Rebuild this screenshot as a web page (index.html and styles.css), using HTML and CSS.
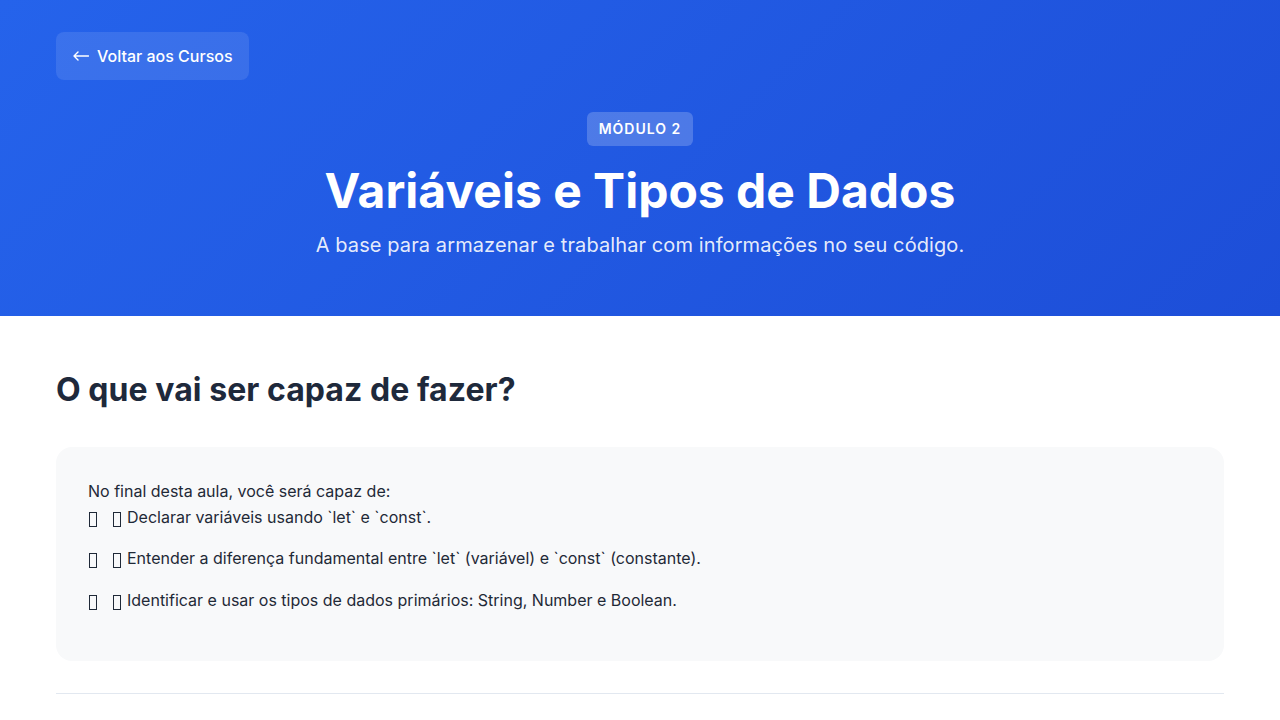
FILE: index.html
```html
<!DOCTYPE html>
<html lang="pt">
<head>
<meta charset="utf-8">
<title>Variáveis e Tipos de Dados</title>
<link rel="stylesheet" href="styles.css">
</head>
<body>
<header class="hero">
  <div class="hero-top">
    <a class="back-btn" href="#">
      <svg class="arrow" width="16" height="10" viewBox="0 0 16 10" aria-hidden="true"><path d="M15.5 5H1M5 1L1 5l4 4" fill="none" stroke="#fff" stroke-width="1.4" stroke-linecap="round" stroke-linejoin="round"/></svg>
      <span>Voltar aos Cursos</span>
    </a>
  </div>
  <div class="hero-center">
    <span class="badge">MÓDULO 2</span>
    <h1 class="title">Variáveis e Tipos de Dados</h1>
    <p class="subtitle">A base para armazenar e trabalhar com informações no seu código.</p>
  </div>
</header>
<main class="content">
  <h2 class="section-title">O que vai ser capaz de fazer?</h2>
  <div class="card">
    <p class="intro">No final desta aula, você será capaz de:</p>
    <ul class="goals">
      <li><span class="tofu first"></span><span class="tofu"></span>Declarar variáveis usando `let` e `const`.</li>
      <li><span class="tofu first"></span><span class="tofu"></span>Entender a diferença fundamental entre `let` (variável) e `const` (constante).</li>
      <li><span class="tofu first"></span><span class="tofu"></span>Identificar e usar os tipos de dados primários: String, Number e Boolean.</li>
    </ul>
  </div>
  <hr class="divider">
</main>
</body>
</html>
```

FILE: styles.css
```css
* { box-sizing: border-box; }
body {
  margin: 0;
  font-family: Inter, "Noto Sans", sans-serif;
  color: #1f2937;
  background: #ffffff;
}
.hero {
  height: 316px;
  background: linear-gradient(135deg, #2563eb 0%, #1d4ed8 100%);
  color: #ffffff;
  padding: 32px 56px 0;
}
.hero-top { display: flex; }
.back-btn {
  display: inline-flex;
  align-items: center;
  gap: 8px;
  height: 48px;
  padding: 0 16px 0 17px;
  border-radius: 8px;
  background: rgba(255, 255, 255, 0.1);
  color: #ffffff;
  text-decoration: none;
  font-size: 16px;
  font-weight: 500;
}
.arrow { display: block; }
.hero-center {
  display: flex;
  flex-direction: column;
  align-items: center;
  margin-top: 32px;
}
.badge {
  display: inline-block;
  height: 34px;
  line-height: 34px;
  padding: 0 12px;
  border-radius: 6px;
  background: rgba(255, 255, 255, 0.2);
  font-size: 14px;
  font-weight: 600;
  letter-spacing: 1px;
}
.title {
  margin: 16px 0 0;
  font-size: 48px;
  font-weight: 700;
  line-height: 58px;
}
.subtitle {
  margin: 10px 0 0;
  font-size: 20px;
  line-height: 30px;
  letter-spacing: 0.1px;
  color: rgba(255, 255, 255, 0.9);
}
.content {
  padding: 50px 56px 0;
}
.section-title {
  margin: 0;
  font-size: 32px;
  line-height: 48px;
  font-weight: 700;
  letter-spacing: 0.05px;
  color: #1e293b;
}
.card {
  margin-top: 33px;
  background: #f8f9fa;
  border-radius: 16px;
  padding: 32px;
  font-size: 16px;
  line-height: 1.6;
  color: #1f2937;
}
.intro { margin: 0; }
.goals {
  list-style: none;
  margin: 0;
  padding: 0;
}
.goals li { margin-bottom: 16px; }
.tofu {
  display: inline-block;
  width: 8px;
  height: 15px;
  border: 1px solid #1f2937;
  vertical-align: -4px;
  margin-right: 6px;
}
.tofu.first {
  margin-left: 1px;
  margin-right: 16px;
}
.divider {
  margin: 32px 0 0;
  border: 0;
  border-top: 1px solid #e2e8f0;
}
```
